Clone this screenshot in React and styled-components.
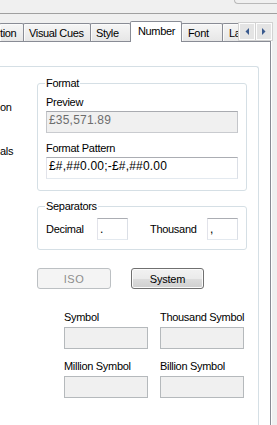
import React from "react";
import styled, { createGlobalStyle } from "styled-components";

const GlobalStyle = createGlobalStyle`
  html, body {
    margin: 0;
    padding: 0;
    height: 100%;
    overflow: hidden;
    background: #f0f0f0;
  }
  body {
    font-family: "Liberation Sans", Arial, sans-serif;
    font-size: 11px;
    color: #000;
  }
  #root {
    height: 100%;
  }
`;

const Window = styled.div`
  height: 100%;
  display: flex;
  flex-direction: column;
`;

const TopStrip = styled.div`
  height: 13px;
  border-bottom: 1px solid #a0a0a0;
  display: flex;
  justify-content: flex-end;
`;

const TopStub = styled.div`
  width: 42px;
  height: 3px;
  border-left: 1px solid #b9b9b9;
  border-bottom: 1px solid #b9b9b9;
  border-bottom-left-radius: 4px;
`;

const TabRow = styled.div`
  height: 27px;
  display: flex;
  align-items: flex-end;
  position: relative;
  z-index: 1;
  white-space: nowrap;
`;

const Tab = styled.div`
  box-sizing: border-box;
  flex: none;
  width: ${(p) => p.$w}px;
  height: ${(p) => (p.$active ? 21 : 18)}px;
  margin-left: -1px;
  margin-bottom: ${(p) => (p.$active ? -1 : 0)}px;
  padding: 3px 0 0 ${(p) => p.$pad}px;
  border: 1px solid #898c95;
  border-bottom: none;
  border-radius: 2px 2px 0 0;
  background: ${(p) => (p.$active ? "#fff" : "linear-gradient(#f6f6f6, #e6e6e6)")};
  box-shadow: ${(p) => (p.$active ? "none" : "inset 1px 1px 0 #fbfbfb")};
  line-height: 13px;
  letter-spacing: -0.35px;
  position: relative;
  z-index: ${(p) => (p.$active ? 2 : 0)};
  overflow: hidden;
`;

const ScrollButtons = styled.div`
  position: absolute;
  top: 9px;
  right: 5px;
  display: flex;
  z-index: 3;
`;

const ScrollButton = styled.div`
  box-sizing: border-box;
  width: 16px;
  height: 17px;
  display: flex;
  align-items: center;
  justify-content: center;
  background: #e4e4e4;
  border: 1px solid #fdfdfd;
  box-shadow: 0 0 0 1px #d2d2d2;
  margin-left: ${(p) => (p.$first ? 0 : 1)}px;
`;

const Panel = styled.div`
  flex: 1;
  background: #fff;
  border-top: 1px solid #898c95;
  border-right: 1px solid #898c95;
  margin-right: 6px;
  padding: 24px 11px 0 0;
  box-shadow: 1px 0 0 #fff;
  overflow: hidden;
`;

const OuterGroup = styled.div`
  display: grid;
  grid-template-columns: 37px 1fr;
  border-top: 1px solid #d5dfe5;
  border-right: 1px solid #d5dfe5;
  border-top-right-radius: 3px;
  padding: 0 11px 40px 0;
`;

const SideColumn = styled.div`
  display: flex;
  flex-direction: column;
  padding-top: 34px;
  overflow: hidden;
`;

const SideLabel = styled.div`
  line-height: 13px;
  margin-top: ${(p) => p.$gap || 0}px;
  letter-spacing: -0.3px;
`;

const MainColumn = styled.div`
  display: flex;
  flex-direction: column;
  min-width: 0;
`;

const GroupBox = styled.fieldset`
  margin: ${(p) => p.$top}px 0 0;
  padding: ${(p) => p.$pt}px 8px ${(p) => p.$pb}px;
  border: 1px solid #d5dfe5;
  border-radius: 3px;
  min-width: 0;
`;

const Legend = styled.legend`
  padding: 0 1px;
  margin-left: -1px;
  line-height: 13px;
  letter-spacing: -0.3px;
`;

const FieldLabel = styled.div`
  line-height: 13px;
  letter-spacing: -0.3px;
  white-space: nowrap;
  margin-top: ${(p) => p.$gap || 0}px;
  margin-bottom: ${(p) => p.$below ?? 2}px;
`;

const TextBox = styled.div`
  box-sizing: border-box;
  height: 22px;
  padding: ${(p) => p.$pt ?? 1}px 2px 0;
  font-size: 12px;
  line-height: 14px;
  letter-spacing: 0.2px;
  border: 1px solid;
  border-color: ${(p) =>
    p.$variant === "disabled"
      ? "#b5b9bc"
      : p.$variant === "readonly"
      ? "#a9abb0 #c4c6ca #c9cbcf #c4c6ca"
      : "#abadb3 #dbdfe6 #e3e9ef #e2e3ea"};
  background: ${(p) => (p.$variant ? "#f0f0f0" : "#fff")};
  color: ${(p) => (p.$variant === "readonly" ? "#6d6d6d" : "#000")};
  white-space: nowrap;
  overflow: hidden;
`;

const SeparatorRow = styled.div`
  display: grid;
  grid-template-columns: 51px 31px 1fr 31px;
  align-items: center;
`;

const InlineLabel = styled.div`
  line-height: 13px;
  letter-spacing: -0.3px;
  padding-left: ${(p) => p.$indent || 0}px;
`;

const ButtonRow = styled.div`
  display: flex;
  gap: 20px;
  margin-top: 18px;
`;

const Button = styled.button`
  box-sizing: border-box;
  width: ${(p) => p.$w}px;
  height: 21px;
  padding: 0;
  font: inherit;
  letter-spacing: ${(p) => (p.disabled ? "0.6px" : "-0.2px")};
  border: 1px solid ${(p) => (p.disabled ? "#bcc0c3" : "#707070")};
  border-radius: 3px;
  background: ${(p) =>
    p.disabled
      ? "#f4f4f4"
      : "linear-gradient(#f2f2f2 0%, #ebebeb 50%, #dddddd 51%, #cfcfcf 100%)"};
  box-shadow: ${(p) => (p.disabled ? "none" : "inset 0 0 0 1px #fbfbfb")};
  color: ${(p) => (p.disabled ? "#8d8d8d" : "#000")};
`;

const SymbolGrid = styled.div`
  display: grid;
  grid-template-columns: 84px 84px;
  column-gap: 12px;
  row-gap: 11px;
  margin: 22px 0 0 27px;
`;

const SymbolField = styled.div`
  display: flex;
  flex-direction: column;
`;

const Arrow = ({ dir }) => (
  <svg width="4" height="7" viewBox="0 0 4 7">
    <polygon
      points={dir === "left" ? "4,0 4,7 0.5,3.5" : "0,0 0,7 3.5,3.5"}
      fill="#3a5a8e"
    />
  </svg>
);

const tabs = [
  { label: "tion", w: 25, pad: 0 },
  { label: "Visual Cues", w: 68, pad: 5 },
  { label: "Style", w: 41, pad: 5 },
  { label: "Number", w: 52, pad: 7, active: true },
  { label: "Font", w: 42, pad: 6 },
  { label: "La", w: 45, pad: 6 },
];

const symbols = ["Symbol", "Thousand Symbol", "Million Symbol", "Billion Symbol"];

export default function App() {
  return (
    <Window>
      <GlobalStyle />
      <TopStrip>
        <TopStub />
      </TopStrip>
      <TabRow>
        {tabs.map((t) => (
          <Tab key={t.label} $w={t.w} $pad={t.pad} $active={t.active}>
            {t.label}
          </Tab>
        ))}
        <ScrollButtons>
          <ScrollButton $first>
            <Arrow dir="left" />
          </ScrollButton>
          <ScrollButton>
            <Arrow dir="right" />
          </ScrollButton>
        </ScrollButtons>
      </TabRow>
      <Panel>
        <OuterGroup>
          <SideColumn>
            <SideLabel>on</SideLabel>
            <SideLabel $gap={31}>als</SideLabel>
          </SideColumn>
          <MainColumn>
            <GroupBox $top={10} $pt={6} $pb={11}>
              <Legend>Format</Legend>
              <FieldLabel>Preview</FieldLabel>
              <TextBox $variant="readonly">£35,571.89</TextBox>
              <FieldLabel $gap={9}>Format Pattern</FieldLabel>
              <TextBox>£#,##0.00;-£#,##0.00</TextBox>
            </GroupBox>
            <GroupBox $top={9} $pt={5} $pb={9}>
              <Legend>Separators</Legend>
              <SeparatorRow>
                <InlineLabel>Decimal</InlineLabel>
                <TextBox $pt={3}>.</TextBox>
                <InlineLabel $indent={22}>Thousand</InlineLabel>
                <TextBox $pt={3}>,</TextBox>
              </SeparatorRow>
            </GroupBox>
            <ButtonRow>
              <Button $w={74} disabled>
                ISO
              </Button>
              <Button $w={73}>System</Button>
            </ButtonRow>
            <SymbolGrid>
              {symbols.map((s) => (
                <SymbolField key={s}>
                  <FieldLabel $below={3}>{s}</FieldLabel>
                  <TextBox $variant="disabled" />
                </SymbolField>
              ))}
            </SymbolGrid>
          </MainColumn>
        </OuterGroup>
      </Panel>
    </Window>
  );
}
